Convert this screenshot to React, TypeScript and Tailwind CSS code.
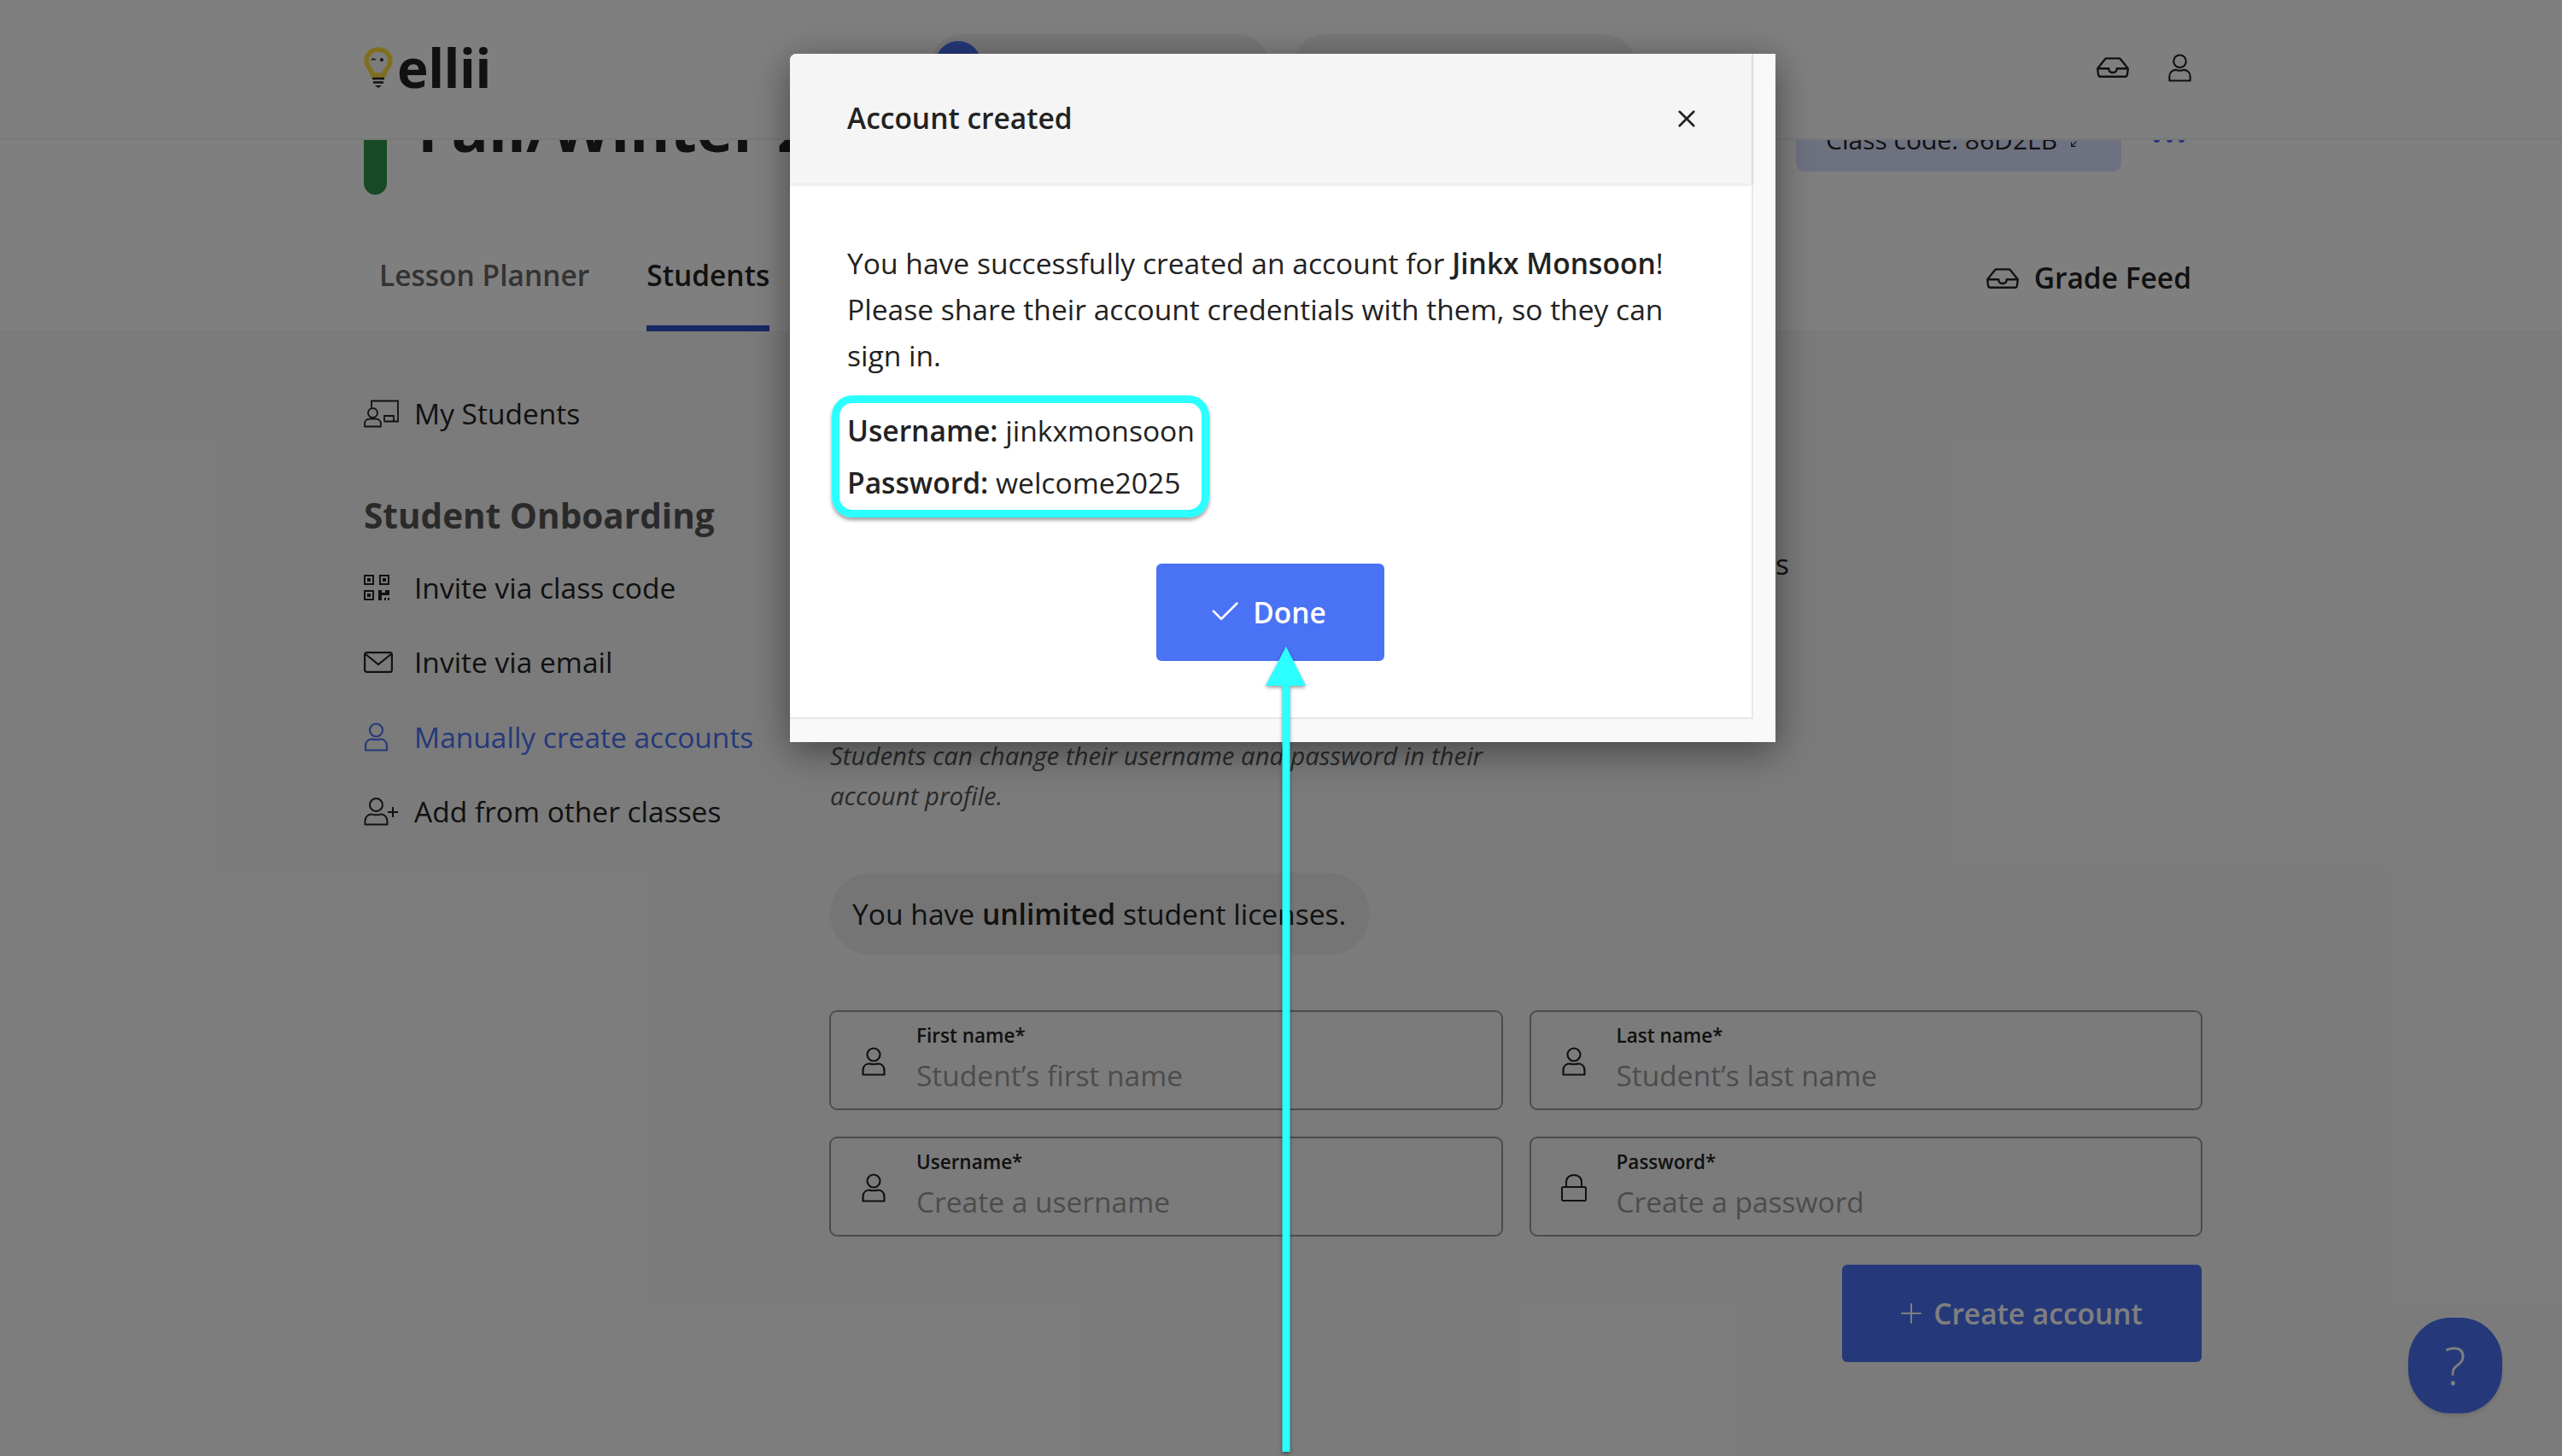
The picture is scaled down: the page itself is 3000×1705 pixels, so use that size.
import { BsArrowsAngleExpand, BsCheck2, BsInbox, BsPlusLg, BsXLg } from "react-icons/bs";

const PersonIcon = ({ className }: { className?: string }) => (
  <svg viewBox="0 0 29 34" fill="none" stroke="currentColor" strokeWidth="2.2" className={className}>
    <circle cx="14.5" cy="9" r="7.5" />
    <path d="M2 32.5v-5c0-5 3.500-8 8-8 1.500 1 7.500 1 9 0 4.500 0 8 3 8 8v5z" strokeLinejoin="round" />
  </svg>
);

const PersonAddIcon = ({ className }: { className?: string }) => (
  <svg viewBox="0 0 41 33" fill="none" stroke="currentColor" strokeWidth="2" className={className}>
    <circle cx="14.500" cy="8.500" r="7.500" />
    <path d="M1.500 31.500v-4c0-5 3.500-8 8-8 1.500 1 8.500 1 10 0 4.500 0 8 3 8 8v4z" strokeLinejoin="round" />
    <path d="M34 11v12M28 17h12" />
  </svg>
);

const StudentsIcon = ({ className }: { className?: string }) => (
  <svg viewBox="0 0 41 33" fill="none" stroke="currentColor" strokeWidth="1.800" className={className}>
    <path d="M9 9V1.500h31V25.500H24" />
    <path d="M24 25.500v-6.500h11v6.500" />
    <circle cx="10.500" cy="15.500" r="5.500" />
    <path d="M1 31.500v-3c0-3.500 2.500-6 6-6h7c3.500 0 6 2.500 6 6v3z" strokeLinejoin="round" />
  </svg>
);

const QrIcon = ({ className }: { className?: string }) => (
  <svg viewBox="0 0 30 30" className={className} fill="currentColor">
    <path fillRule="evenodd" d="M0 0h12v12H0zM2 2v8h8V2zM18 0h12v12H18zM20 2v8h8V2zM0 18h12v12H0zM2 20v8h8v-8z" />
    <path d="M4 4h4v4H4zM22 4h4v4h-4zM4 22h4v4H4z" />
    <path d="M17 18h4v3h4v-3h5v6H21v6h-4z" />
    <path d="M24 27h2v3h-2zM28 27h2v3h-2z" />
  </svg>
);

const MailIcon = ({ className }: { className?: string }) => (
  <svg viewBox="0 0 34 25" fill="none" stroke="currentColor" strokeWidth="2.200" className={className}>
    <rect x="1.100" y="1.100" width="31.800" height="22.800" rx="2.500" />
    <path d="M2 3l15 12L32 3" />
  </svg>
);

const LockIcon = ({ className }: { className?: string }) => (
  <svg viewBox="0 0 30 32" fill="none" stroke="currentColor" strokeWidth="2" className={className}>
    <path d="M6 15V9c0-5 4-8 9-8s9 3 9 8v6" />
    <rect x="1" y="15" width="28" height="16" rx="1.500" />
  </svg>
);

const Logo = () => (
  <div className="flex items-end w-[145px] shrink-0">
    <svg viewBox="0 0 34 48" className="w-[34px] h-[48px] shrink-0">
      <path d="M17 3C8.500 3 3 9 3 16c0 6 4 9 6 13 1 2 1.500 3 1.500 4h13c0-1 .5-2 1.500-4 2-4 6-7 6-13 0-7-5.500-13-14-13z" fill="#f8f8f8" stroke="#ffdd3c" strokeWidth="5.500" />
      <path d="M9 15.500c1-2 3.500-2 4.500 0" fill="none" stroke="#222" strokeWidth="1.600" />
      <circle cx="21" cy="15" r="2" fill="#222" />
      <path d="M10 37h14M11 41.500h12" stroke="#222" strokeWidth="2.500" />
      <path d="M13 45h8l-4 3z" fill="#222" />
    </svg>
    <span className="text-[62px] leading-[48px] font-bold text-[#222] tracking-[-0.5px] ml-[5px] h-[48px]">ellii</span>
  </div>
);

const Field = ({ label, placeholder, lock }: { label: string; placeholder: string; lock?: boolean }) => (
  <div className="h-[117px] border-[2.500px] border-[#999] rounded-[9px] flex items-center pl-[35px]">
    {lock ? <LockIcon className="w-[30px] h-[32px] text-[#222] mt-[2px]" /> : <PersonIcon className="w-[30px] h-[34px] text-[#222] mt-[2px]" />}
    <div className="ml-[35px] flex flex-col pb-[9px]">
      <span className="text-[22.500px] leading-[30px] font-semibold text-[#222]">{label}</span>
      <span className="text-[33.500px] leading-[46px] mt-[8px] -mb-[6px] text-[#999]">{placeholder}</span>
    </div>
  </div>
);

const SideLink = ({ icon, label, active }: { icon: React.ReactNode; label: string; active?: boolean }) => (
  <div className={`h-[87.5px] flex items-center text-[33.500px] ${active ? "text-[#4a72f5]" : "text-[#222]"}`}>
    <span className="w-[59px] flex items-center shrink-0">{icon}</span>
    <span>{label}</span>
  </div>
);

export default function App() {
  return (
    <div className="relative w-[3000px] h-[1705px] overflow-hidden bg-[#f7f7f7] font-['Open_Sans',sans-serif] text-[#222]">
      {/* Header */}
      <header className="relative z-10 h-[164px] bg-white border-b-2 border-[#f0f0f0] flex items-start pl-[426px] pr-[433px] pt-[55px]">
        <Logo />
        <div className="flex gap-[23px] ml-[516px] -mt-[15px]">
          <div className="w-[402px] h-[82px] rounded-full bg-[#f0f0f0] pl-[8px] pt-[8px]">
            <div className="w-[54px] h-[54px] rounded-full bg-[#4a72f5]" />
          </div>
          <div className="w-[405px] h-[82px] rounded-full bg-[#f0f0f0]" />
        </div>
        <div className="ml-auto flex items-center gap-[45px] mt-[5px]">
          <BsInbox className="w-[38px] h-[38px] text-[#222]" />
          <PersonIcon className="w-[29px] h-[33px] text-[#222]" />
        </div>
      </header>

      {/* Class title and tabs */}
      <section className="bg-white h-[225px] flex flex-col border-b border-[#f0f0f0]">
        <div className="-mt-[62px] h-[126px] pl-[426px] pr-[442px] flex">
          <div className="w-[27px] h-[126px] rounded-b-full bg-[#2e9448]" />
          <h1 className="ml-[36px] text-[72px] leading-[96px] font-bold text-[#222] whitespace-nowrap">Fall/Winter 2025</h1>
          <div className="ml-auto flex">
            <div className="w-[381px] h-[80px] mt-[19px] rounded-[10px] bg-[#dde2ff] flex items-center pl-[35px] pt-[4px] gap-[16px] text-[30px]">
              <span>Class code: 86D2LB</span>
              <BsArrowsAngleExpand className="w-[18px] h-[18px]" />
            </div>
            <div className="ml-[38px] mt-[58px] w-[36px] h-[7px] flex justify-between">
              <div className="w-[7px] h-[7px] rounded-full bg-[#4a72f5]" />
              <div className="w-[7px] h-[7px] rounded-full bg-[#4a72f5]" />
              <div className="w-[7px] h-[7px] rounded-full bg-[#4a72f5]" />
            </div>
          </div>
        </div>
        <div className="h-[161px] pt-[32px] pl-[444px] pr-[434px] flex items-stretch text-[33.500px]">
          <div className="flex items-center font-semibold text-[#666] pb-[4px]">Lesson Planner</div>
          <div className="flex items-center font-semibold ml-[67px] border-b-[7px] border-[#3050c8] pt-[3px]">Students</div>
          <div className="ml-auto flex items-center font-semibold gap-[18px] pt-[3px]">
            <BsInbox className="w-[38px] h-[38px]" />
            <span>Grade Feed</span>
          </div>
        </div>
      </section>

      {/* Sidebar and form */}
      <div className="flex pl-[426px]">
        <aside className="w-[545px] shrink-0 pt-[70px]">
          <div className="h-[50px] flex items-center text-[33.500px]">
            <StudentsIcon className="w-[41px] h-[33px] mr-[18px]" />
            <span>My Students</span>
          </div>
          <h2 className="mt-[70px] h-[50px] flex items-center text-[40.500px] font-bold text-[#555]">Student Onboarding</h2>
          <div className="mt-[15px]">
            <SideLink icon={<QrIcon className="w-[30px] h-[30px]" />} label="Invite via class code" />
            <SideLink icon={<MailIcon className="w-[34px] h-[25px]" />} label="Invite via email" />
            <SideLink icon={<PersonIcon className="w-[29px] h-[34px]" />} label="Manually create accounts" active />
            <SideLink icon={<PersonAddIcon className="w-[41px] h-[33px]" />} label="Add from other classes" />
          </div>
        </aside>
        <main className="w-[1608px] pt-[248px]">
          <div className="h-[47px] leading-[47px] text-[33.500px] text-right w-[1124px]">accounts</div>
          <p className="mt-[178px] ml-[1px] w-[800px] text-[29.400px] leading-[47px] italic text-[#555]">
            Students can change their username and password in their account profile.
          </p>
          <div className="mt-[66px] ml-[1px] w-[632px] h-[96px] rounded-full bg-[#ebebeb] flex items-center pl-[26px] text-[33.600px] whitespace-nowrap">
            <span>You have <b className="font-semibold">unlimited</b> student licenses.</span>
          </div>
          <div className="mt-[65px] grid grid-cols-2 gap-[31px]">
            <Field label="First name*" placeholder="Student’s first name" />
            <Field label="Last name*" placeholder="Student’s last name" />
            <Field label="Username*" placeholder="Create a username" />
            <Field label="Password*" placeholder="Create a password" lock />
          </div>
          <div className="mt-[33px] flex justify-end pr-[1px]">
            <button className="w-[421px] h-[114px] rounded-[6px] bg-[#4a72f5] text-white text-[33.500px] font-semibold pr-[4px] flex items-center justify-center gap-[10px]">
              <BsPlusLg className="w-[32px] h-[32px]" />
              Create account
            </button>
          </div>
        </main>
      </div>

      {/* Help button */}
      <div className="absolute left-[2820px] top-[1543px] w-[110px] h-[112px] rounded-[45%] bg-[#4a72f5] text-white flex items-center justify-center text-[60px] font-light shadow-md">?</div>

      <div className="absolute inset-0 z-20 bg-black/50" />

      {/* Modal */}
      <div className="absolute z-30 left-[925px] top-[63px] w-[1154px] h-[806px] bg-[#f9f9f9] rounded-tl-[8px] overflow-hidden shadow-[0_10px_45px_rgba(0,0,0,0.45)] flex flex-col">
        <div className="w-[1128px] h-[779px] border-r-2 border-b-2 border-[#e8e8e8] bg-white flex flex-col shrink-0">
          <div className="h-[152px] shrink-0 bg-[#f5f5f5] shadow-[0_1px_4px_rgba(0,0,0,0.15)] flex items-center justify-between pl-[67px] pr-[64px]">
            <span className="text-[33.500px] font-semibold pb-[2px]">Account created</span>
            <BsXLg className="w-[24px] h-[24px] text-[#222] stroke-[0.8px]" />
          </div>
          <div className="pt-[66px] pl-[67px] pr-[40px] flex flex-col">
            <p className="text-[33.600px] leading-[54px] w-[990px]">
              You have successfully created an account for <b className="font-semibold">Jinkx Monsoon</b>! Please share their account credentials with them, so they can sign in.
            </p>
            <div className="mt-[20px] -ml-[18px] w-[442px] h-[143px] border-[9px] border-[#2bffff] rounded-[24px] pl-[9px] shadow-[0_3px_4px_rgba(0,0,0,0.4)] text-[33.600px] leading-[61px] flex flex-col justify-center whitespace-nowrap">
              <span><b className="font-semibold">Username:</b> jinkxmonsoon</span>
              <span><b className="font-semibold">Password:</b> welcome2025</span>
            </div>
            <div className="mt-[54px] flex justify-center -ml-[29px]">
              <button className="w-[267px] h-[114px] rounded-[6px] bg-[#4a72f5] text-white text-[33.500px] font-semibold pr-[8px] flex items-center justify-center gap-[12px]">
                <BsCheck2 className="w-[42px] h-[42px]" />
                Done
              </button>
            </div>
          </div>
        </div>
      </div>

      {/* Tutorial arrow */}
      <svg viewBox="0 0 47 943" className="absolute z-40 left-[1482px] top-[757px] w-[47px] h-[943px] drop-shadow-[0_2px_2px_rgba(0,0,0,0.4)]">
        <path d="M24 0L47 46H28.500V943H19.500V46H0z" fill="#2bffff" />
      </svg>
    </div>
  );
}
